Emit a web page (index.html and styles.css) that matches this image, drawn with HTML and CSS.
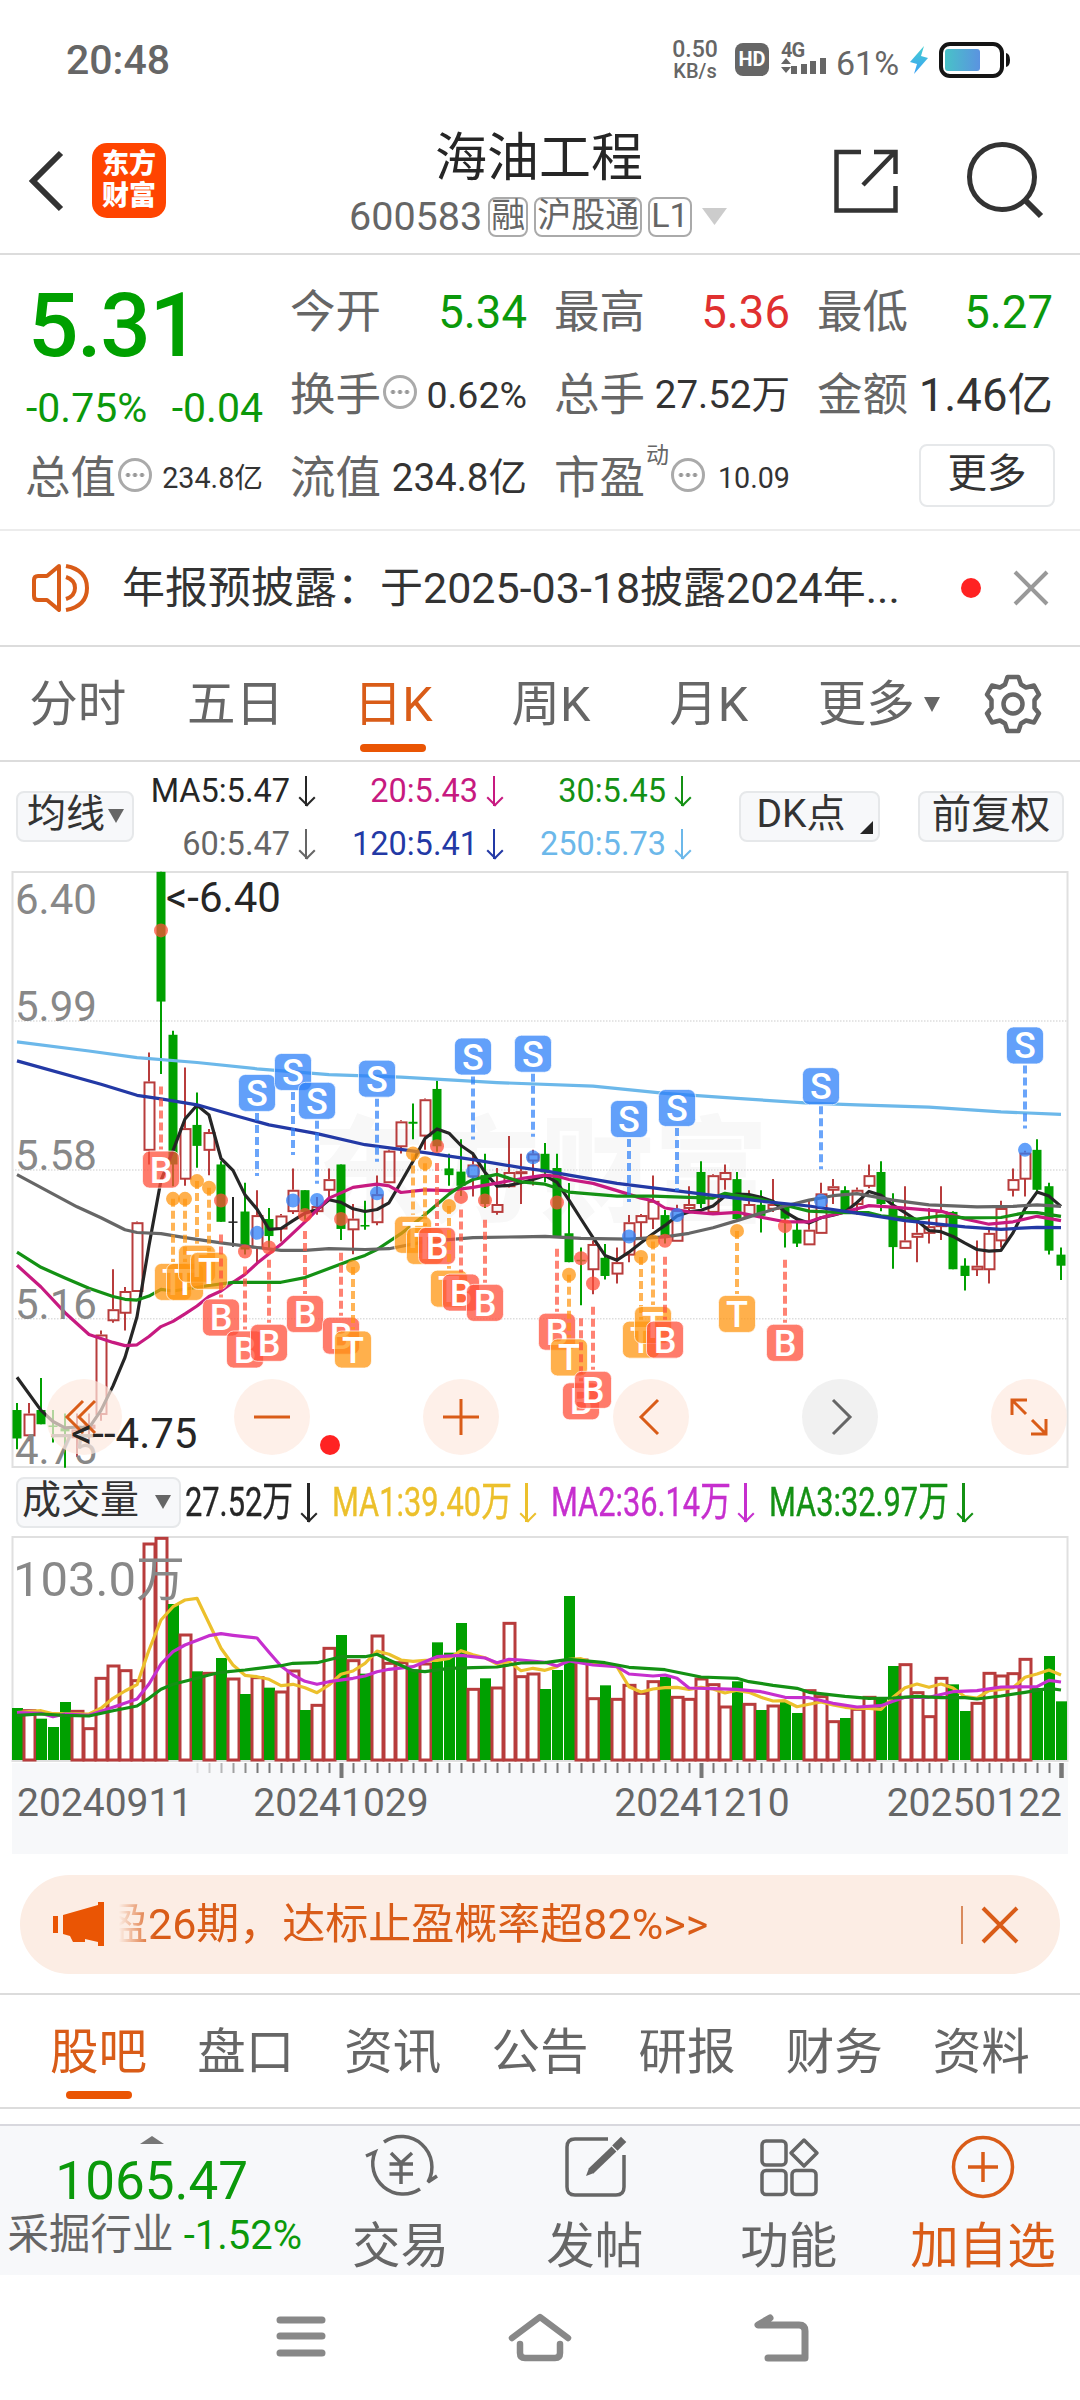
FILE: index.html
```html
<!DOCTYPE html>
<html lang="zh-CN">
<head>
    <meta charset="utf-8">
    <title>海油工程 600583</title>
    <link rel="stylesheet" href="styles.css">
</head>
<body>
<div class="status">
    <span class="clock">20:48</span>
    <span class="speed">0.50<br><b>KB/s</b></span>
    <span class="hd">HD</span>
    <span class="signal">
        <b>4G</b>
        <svg width="46" height="18" viewBox="0 0 46 18"><path d="M0 6L5 0L10 6zM0 9L5 15L10 9z"/><path d="M10 8h6v8h-6zM20 6h6v10h-6zM29 3h6v13h-6zM39 0h6v16h-6z"/></svg>
    </span>
    <span class="percent">61%</span>
    <svg class="bolt" width="20" height="32" viewBox="0 0 20 32">
        <defs><linearGradient id="spark" x2="0" y2="1"><stop offset="0" stop-color="#45cfd0"/><stop offset="1" stop-color="#3aa0f5"/></linearGradient></defs>
        <path d="M15 2L1 18l7 2L5 30L19 14l-7-2z" fill="url(#spark)"/>
    </svg>
    <svg class="battery" width="74" height="38" viewBox="0 0 74 38">
        <defs><linearGradient id="charge"><stop offset="0" stop-color="#48c2c8"/><stop offset="1" stop-color="#5b93e0"/></linearGradient></defs>
        <rect x="3" y="3" width="61" height="32" rx="9" fill="none" stroke="#151515" stroke-width="4"/>
        <rect x="7" y="8" width="35" height="22" rx="3" fill="url(#charge)"/>
        <path d="M68 12q4 1 4 7t-4 7z" fill="#151515"/>
    </svg>
</div>

<div class="header">
    <svg class="back" width="38" height="64" viewBox="0 0 38 64"><path d="M34 4L6 32L34 60" fill="none" stroke="#333" stroke-width="6"/></svg>
    <div class="logo">东方<br>财富</div>
    <div class="stock">
        <h1>海油工程</h1>
        <p>600583<i>融</i><i>沪股通</i><i>L1</i><svg width="26" height="18" viewBox="0 0 26 18"><path d="M0 0h25L12.500 17z" fill="#ccc"/></svg></p>
    </div>
    <svg class="share" width="68" height="68" viewBox="0 0 68 68"><path d="M29 5H4.500V63.500H63.500V39M42 5H63.500V27M63 5L31 38" fill="none" stroke="#333" stroke-width="4.500"/></svg>
    <svg class="search" width="80" height="80" viewBox="0 0 80 80"><circle cx="37" cy="36" r="32.500" fill="none" stroke="#333" stroke-width="5"/><path d="M60 59L76 75" stroke="#333" stroke-width="6"/></svg>
</div>

<div class="quote">
    <div class="price">5.31</div>
    <div><label>今开</label><span class="v45 down">5.34</span></div>
    <div><label>最高</label><span class="v45 up">5.36</span></div>
    <div><label>最低</label><span class="v45 down">5.27</span></div>
    <div class="change"><span>-0.75%</span><span>-0.04</span></div>
    <div><label>换手</label><em class="dots"></em><span class="v37">0.62%</span></div>
    <div><label>总手</label><span class="v38">27.52万</span></div>
    <div><label>金额</label><span class="v45">1.46亿</span></div>
    <div><label>总值</label><em class="dots"></em><span class="v28">234.8亿</span></div>
    <div><label>流值</label><span class="v38">234.8亿</span></div>
    <div><label>市盈<sup>动</sup></label><em class="dots dots-pe"></em><span class="v28">10.09</span></div>
    <div><button class="more">更多</button></div>
</div>

<div class="notice">
    <svg width="60" height="50" viewBox="0 0 60 50" fill="none" stroke="#d95c18" stroke-width="4"><path d="M28 3L16 13H7Q3 13 3 17V33Q3 37 7 37H16L28 47Z" stroke-linejoin="round"/><path d="M35 14Q44 17 44 25T35 36M35 3Q56 7 56 25T35 47"/></svg>
    <span>年报预披露：于2025-03-18披露2024年...</span>
    <i class="red"></i>
    <svg width="36" height="36" viewBox="0 0 36 36"><path d="M2 2L34 34M34 2L2 34" stroke="#999" stroke-width="4"/></svg>
</div>

<div class="periods">
    <a>分时</a><a>五日</a><a class="on">日K</a><a>周K</a><a>月K</a><a>更多<small></small></a>
    <svg width="60" height="60" viewBox="0 0 60 60" fill="none" stroke="#666" stroke-width="4.500"><path d="M24.500 3H35.500L38 10.500L43 13.500L51 11.500L56 20.500L51.500 26V34L56 39.500L51 48.500L43 46.500L38 49.500L35.500 57H24.500L22 49.500L17 46.500L9 48.500L4 39.500L8.500 34V26L4 20.500L9 11.500L17 13.500L22 10.500Z" stroke-linejoin="round"/><circle cx="30" cy="30" r="9.500"/></svg>
</div>

<div class="averages">
    <button class="pick">均线<small></small></button>
    <div class="legend">
        <span class="c-black">MA5:5.47<s></s></span><span class="c-pink">20:5.43<s></s></span><span class="c-green">30:5.45<s></s></span>
        <span class="c-gray">60:5.47<s></s></span><span class="c-blue">120:5.41<s></s></span><span class="c-sky">250:5.73<s></s></span>
    </div>
    <button class="dk">DK点</button>
    <button class="adjust">前复权</button>
</div>

<svg id="kline" width="1080" height="598" viewBox="0 870 1080 598"></svg>

<div class="volume-head">
    <button class="pick">成交量<small></small></button>
    <span class="c-black w105"><b>27.52万</b></span><s class="c-black"></s>
    <span class="c-yellow w177"><b>MA1:39.40万</b></span><s class="c-yellow"></s>
    <span class="c-violet w177"><b>MA2:36.14万</b></span><s class="c-violet"></s>
    <span class="c-green w177"><b>MA3:32.97万</b></span><s class="c-green"></s>
</div>

<svg id="volume" width="1080" height="326" viewBox="0 1536 1080 326"></svg>

<div class="banner">
    <svg width="54" height="46" viewBox="0 0 54 46" fill="#ea5504"><path d="M0 14h5v17H0zM10 13L45 3V0h6v44h-6v-4l-13-3v3H20l-3-6l-7-2z"/></svg>
    <span>盈26期，达标止盈概率超82%&gt;&gt;</span>
    <svg class="shut" width="38" height="38" viewBox="0 0 38 38"><path d="M2 2L36 36M36 2L2 36" stroke="#d95c18" stroke-width="4"/></svg>
</div>

<div class="sections">
    <a class="on">股吧</a><a>盘口</a><a>资讯</a><a>公告</a><a>研报</a><a>财务</a><a>资料</a>
</div>

<div class="toolbar">
    <div class="index">
        <small></small>
        <strong>1065.47</strong>
        <p>采掘行业 <span>-1.52%</span></p>
    </div>
    <a>
        <svg width="76" height="68" viewBox="0 0 76 68" fill="none" stroke="#666" stroke-width="3.500"><path d="M21 9A30.500 30.500 0 0 1 65 49L74 43M57 56A30.500 30.500 0 0 1 12 19L3 23"/><path d="M28 20L38 30L49 20M26.500 31H50M26.500 41H50M38 30V51"/></svg>
        交易
    </a>
    <a>
        <svg width="68" height="68" viewBox="0 0 68 68" fill="none" stroke="#666" stroke-width="3.500"><path d="M47 6H14Q6 6 6 14V54Q6 62 14 62H55Q63 62 63 54V22"/><path d="M30 38L53 16" stroke-width="7"/><path d="M56.500 12.500L60 9" stroke-width="7.500" stroke-linecap="square"/><path d="M25 43L28 35L33 40Z" fill="#666" stroke="none"/></svg>
        发帖
    </a>
    <a>
        <svg width="68" height="68" viewBox="0 0 68 68" fill="none" stroke="#666" stroke-width="3.500"><rect x="7" y="8" width="24" height="24" rx="4"/><rect x="7" y="37.500" width="24" height="24" rx="4"/><rect x="37" y="37.500" width="24" height="24" rx="4"/><path d="M49 7L62 20L49 33L36 20Z" stroke-linejoin="round"/></svg>
        功能
    </a>
    <a class="on">
        <svg width="68" height="68" viewBox="0 0 68 68" fill="none" stroke="#d95c18" stroke-width="3.500"><circle cx="34" cy="34" r="29.500"/><path d="M19 34H49M34 19V49"/></svg>
        加自选
    </a>
</div>

<div class="nav">
    <svg width="56" height="50" viewBox="0 0 56 50"><path d="M7 9H49M7 25H49M7 42H49"/></svg>
    <svg width="66" height="54" viewBox="0 0 66 54"><path d="M5 27L33 6L61 27M13 33V42Q13 47 18 47H48Q53 47 53 42V33" fill="none" stroke-width="6.500" stroke-linejoin="round"/></svg>
    <svg width="60" height="54" viewBox="0 0 60 54"><path d="M19 7L7 14H48Q54 14 54 20V47H17" stroke-linejoin="round"/></svg>
</div>
<script src="script.js"></script>
</body>
</html>
```
FILE: styles.css
```css
* {
    box-sizing: border-box;
    margin: 0;
    padding: 0;
}
body {
    width: 1080px;
    height: 2400px;
    overflow: hidden;
    background: #fff;
    color: #333;
    font-family: Roboto, "Noto Sans CJK SC", sans-serif;
    line-height: 1;
}
svg {
    display: block;
    flex: none;
}
i, em, s {
    font-style: normal;
    text-decoration: none;
}
button {
    font-family: inherit;
    line-height: 1;
    color: #333;
    background: #f7f8fa;
    border: 2px solid #e6e8ea;
    border-radius: 8px;
    white-space: nowrap;
}

/* status bar */
.status {
    display: flex;
    align-items: center;
    height: 120px;
    padding: 0 65px 0 66px;
    color: #666;
}
.clock {
    font-size: 41px;
    font-weight: 500;
    width: 604px;
}
.speed {
    width: 50px;
    font-size: 23px;
    font-weight: 500;
    line-height: 21px;
    text-align: center;
}
.speed b {
    font-size: 20px;
    font-weight: 500;
}
.hd {
    width: 34px;
    height: 33px;
    margin: -1px 0 0 15px;
    border-radius: 8px;
    background: #666;
    color: #fff;
    font-size: 20px;
    font-weight: 700;
    line-height: 33px;
    text-align: center;
}
.signal {
    width: 46px;
    margin: -2px 0 0 12px;
    fill: #666;
}
.signal b {
    display: block;
    font-size: 20px;
    height: 15px;
    line-height: 15px;
    letter-spacing: -1px;
}
.percent {
    margin: 6px 0 0 9px;
    width: 64px;
    font-size: 34px;
}
.bolt {
    margin-left: 9px;
}
.battery {
    margin-left: 9px;
}

/* title bar */
.header {
    display: flex;
    align-items: center;
    height: 135px;
    padding: 0 35px 0 27px;
    border-bottom: 2px solid #dcdcdc;
}
.back {
    margin-top: -12px;
}
.logo {
    width: 75px;
    height: 75px;
    margin: -12px 0 0 27px;
    padding-top: 5px;
    border-radius: 15px;
    background: #ff4400;
    color: #fff;
    font-size: 27px;
    font-weight: 900;
    line-height: 32px;
    text-align: center;
}
.stock {
    width: 378px;
    margin-left: 183px;
}
.stock h1 {
    width: 380px;
    height: 61px;
    color: #262626;
    font-size: 52px;
    font-weight: 400;
    line-height: 48px;
    text-align: center;
}
.stock p {
    display: flex;
    align-items: center;
    gap: 6px;
    height: 42px;
    font-size: 39.500px;
    color: #666;
    white-space: nowrap;
}
.stock i {
    height: 40px;
    padding: 0 1px;
    border: 2px solid #aaa;
    border-radius: 8px;
    font-size: 34px;
    line-height: 33px;
}
.stock p svg {
    margin-left: 4px;
}
.share {
    margin: -12px 0 0 105px;
}
.search {
    margin: -11px 0 0 65px;
}

/* quote */
.quote {
    display: grid;
    grid-template-columns: 237px 236px 235px 235px;
    grid-template-rows: 83px 83px 83px;
    column-gap: 28px;
    height: 276px;
    padding: 16px 0 0 26px;
    border-bottom: 2px solid #ececec;
}
.quote > div {
    display: flex;
    align-items: center;
}
.quote label {
    position: relative;
    margin-left: -1px;
    color: #666;
    font-size: 45.500px;
}
.quote sup {
    position: absolute;
    left: 92px;
    top: -12px;
    font-size: 23px;
}
.quote span {
    margin-left: auto;
}
.quote .v45 { font-size: 45.500px; }
.quote .v38 { font-size: 38.500px; }
.quote .v37 { font-size: 37.500px; }
.quote .v28 { font-size: 28.700px; }
.quote .up { color: #e03030; }
.quote .down { color: #0b990b; }
.quote .price {
    padding: 26px 0 0 2px;
    color: #00a000;
    font-size: 89px;
    font-weight: 500;
    letter-spacing: -1.500px;
}
.quote .change {
    padding-top: 25px;
    color: #0b990b;
    font-size: 41px;
}
.quote .change span {
    margin: 0;
}
.quote .change span + span {
    margin-left: auto;
}
.dots {
    width: 34px;
    height: 34px;
    margin: -8px 0 0 2px;
    border: 3px solid #aaa;
    border-radius: 50%;
    background: radial-gradient(circle, #999 1.800px, transparent 2.500px) center / 7px 28px repeat-x;
    background-clip: content-box;
    padding: 0 3px;
}
.dots-pe {
    margin-left: 26px;
}
.quote .more {
    width: 136px;
    height: 63px;
    margin: -7px -2px 0 auto;
    padding-bottom: 3px;
    background: #fff;
    font-size: 39.500px;
}

/* notice */
.notice {
    display: flex;
    align-items: center;
    height: 116px;
    padding: 0 31px 0 31px;
    border-bottom: 2px solid #dcdcdc;
}
.notice span {
    margin-left: 31px;
    font-size: 43px;
    white-space: nowrap;
}
.red {
    width: 20px;
    height: 20px;
    margin: 0 32px 0 auto;
    border-radius: 50%;
    background: #f22;
}

/* tabs */
.periods, .sections {
    display: flex;
    align-items: center;
    height: 115px;
    border-bottom: 2px solid #dcdcdc;
}
.periods a, .sections a {
    position: relative;
    top: 2px;
    width: 157.700px;
    color: #666;
    font-size: 48.500px;
    text-align: center;
}
.periods a {
    left: -1px;
    white-space: nowrap;
}
.periods > svg {
    margin-left: 37px;
}
.periods .on, .sections .on {
    color: #d95c18;
}
.periods .on::after, .sections .on::after {
    content: "";
    position: absolute;
    left: 50%;
    bottom: -22px;
    width: 66px;
    height: 8px;
    margin-left: -33px;
    border-radius: 4px;
    background: #ea5504;
}
.periods small {
    position: absolute;
    right: 5px;
    top: 16px;
    border: 8px solid transparent;
    border-top: 15px solid #666;
    border-bottom: 0;
}

/* averages */
.averages {
    display: flex;
    align-items: center;
    height: 108px;
    padding-left: 16px;
}
.pick {
    display: flex;
    align-items: center;
    justify-content: space-between;
    height: 51px;
    padding: 0 8px 3px;
    font-size: 39px;
}
.averages .pick {
    width: 118px;
    padding-left: 9px;
}
.pick small {
    margin-top: 3px;
    border: 8px solid transparent;
    border-top: 14px solid #666;
    border-bottom: 0;
}
.legend {
    display: grid;
    grid-template-columns: 180px 188px 188px;
    grid-template-rows: 53px 53px;
    margin: 3px 49px 0 0;
}
.legend span {
    display: flex;
    align-items: center;
    justify-content: flex-end;
    font-size: 32.500px;
}
s {
    position: relative;
    width: 16px;
    height: 30px;
    background: linear-gradient(currentColor, currentColor) center / 2px 100% no-repeat;
}
s::after {
    content: "";
    position: absolute;
    left: 3px;
    bottom: 2px;
    width: 10px;
    height: 10px;
    border: solid currentColor;
    border-width: 0 2px 2px 0;
    transform: rotate(45deg);
}
.legend s {
    margin-left: 8px;
}
.averages > button {
    height: 51px;
}
.dk {
    position: relative;
    width: 141px;
    padding: 0 17px 3px 0;
    font-size: 39px;
}
.dk::after {
    content: "";
    position: absolute;
    right: 5px;
    bottom: 6px;
    border-left: 13px solid transparent;
    border-bottom: 13px solid #262626;
}
.adjust {
    width: 146px;
    margin-left: 38px;
    padding-bottom: 3px;
    font-size: 39.500px;
}
.c-black { color: #262626; }
.c-pink { color: #c71a80; }
.c-green { color: #149114; }
.c-gray { color: #666; }
.c-blue { color: #2339a5; }
.c-sky { color: #6cb8ea; }
.c-yellow { color: #ecc02c; }
.c-violet { color: #c62fce; }

/* volume */
.volume-head {
    display: flex;
    align-items: center;
    height: 68px;
    padding-left: 16px;
}
.volume-head .pick {
    width: 165px;
    margin-right: 4px;
    padding: 0 8px 3px 4px;
}
.volume-head span {
    font-size: 41px;
}
.volume-head b {
    display: inline-block;
    font-weight: 400;
    white-space: nowrap;
    transform: scaleX(.75);
    transform-origin: left;
    -webkit-text-stroke: .4px currentColor;
}
.volume-head s {
    height: 39px;
    margin: 0 16px 0 8px;
    background-size: 3px 100%;
}
.w105 { width: 107px; }
.w177 { width: 178.500px; }

/* charts */
.axis {
    fill: #888;
    font-size: 42px;
}
.note {
    fill: #262626;
    font-size: 42px;
}
.date {
    fill: #666;
    font-size: 39px;
}
.mark {
    fill: #fff;
    font: 500 36px Roboto, sans-serif;
    text-anchor: middle;
}
.watermark {
    fill: #f8f8f8;
    font-size: 114px;
    font-weight: 900;
}

/* banner */
.banner {
    display: flex;
    align-items: center;
    width: 1040px;
    height: 99px;
    margin: 13px 20px 19px;
    padding: 0 41px 0 33px;
    border-radius: 50px;
    background: #fcede4;
    color: #d95c18;
}
.banner span {
    margin-left: -2px;
    font-size: 43px;
    white-space: nowrap;
    -webkit-mask-image: linear-gradient(90deg, transparent 14px, #000 50px);
    mask-image: linear-gradient(90deg, transparent 14px, #000 50px);
}
.shut {
    box-sizing: content-box;
    margin-left: auto;
    padding-left: 18px;
    border-left: 2px solid #d98a5c;
}

.sections {
    height: 116px;
    padding: 0 25px;
    border-top: 2px solid #dcdcdc;
}
.sections a {
    width: 147.140px;
}

/* toolbar */
.toolbar {
    display: flex;
    height: 151px;
    margin-top: 15px;
    border-top: 2px solid #d8d8de;
    background: #f7f8fa;
}
.index {
    width: 304px;
    text-align: center;
}
.index small {
    display: block;
    width: 24px;
    margin: 10px 0 14px 140px;
    border: 12px solid transparent;
    border-bottom: 8px solid #777;
    border-top: 0;
}
.index strong {
    display: block;
    color: #0b990b;
    font-size: 53px;
    font-weight: 400;
    line-height: 46px;
}
.index p {
    margin: 10px 0 0 6px;
    color: #666;
    font-size: 41.500px;
    white-space: nowrap;
}
.index span {
    color: #0b990b;
    font-size: 40px;
}
.toolbar a {
    display: flex;
    flex-direction: column;
    align-items: center;
    width: 194.500px;
    padding-top: 7px;
    color: #666;
    font-size: 48.500px;
    line-height: 92px;
    white-space: nowrap;
}
.toolbar .on {
    color: #d95c18;
}

.nav {
    display: flex;
    justify-content: center;
    gap: 178px;
    padding: 36px 0 0 3px;
    fill: none;
    stroke: #888;
    stroke-width: 7px;
    stroke-linecap: round;
}
```
FILE: script.js
```js
var GREEN = '#00a000', RED = '#b83c3c';

// direction, high, body top, body bottom, low
var candles = [
    ['g',1373,1391,1463,1490],['r',1373,1400,1455,1470],['g',1310,1391,1427,1427],['g',1391,1430,1434,1473],
    ['g',1400,1437,1445,1537],['r',1400,1440,1460,1510],['r',1400,1428,1436,1480],['r',1190,1200,1401,1418],
    ['r',1035,1136,1164,1170],['r',1080,1090,1145,1190],['r',914,916,1090,1092],['r',487,560,733,770],
    ['g',30,30,358,541],['g',432,442,770,825],['r',525,678,806,824],['g',588,670,723,778],
    ['r',680,688,733,797],['g',762,770,915,915],['k',852,914,917,978],['g',816,889,985,998],
    ['r',835,898,980,1018],['g',880,908,951,985],['r',895,899,932,965],['r',780,834,888,895],
    ['g',835,835,890,910],['r',852,875,888,897],['r',780,807,834,855],['g',770,770,933,961],
    ['r',870,907,934,997],['g',862,923,927,935],['r',798,845,916,924],['r',733,735,815,817],
    ['r',658,661,724,742],['g',616,662,667,706],['r',603,605,697,733],['g',558,579,724,738],
    ['g',743,780,797,824],['g',706,788,824,850],['r',740,770,800,851],['g',743,797,870,880],
    ['r',779,870,890,897],['r',698,789,825,828],['r',743,787,791,870],['r',733,742,760,823],
    ['g',716,743,790,815],['g',743,779,951,955],['g',817,944,1017,1017],['g',980,1011,1015,1126],
    ['r',962,971,1035,1098],['g',971,1006,1052,1061],['r',980,1017,1046,1071],['r',898,916,998,1017],
    ['r',895,898,916,955],['r',798,862,907,933],['g',885,898,950,970],['r',872,885,963,963],
    ['r',825,870,880,890],['g',762,789,870,880],['r',795,797,890,890],['r',770,789,807,834],
    ['g',789,807,908,915],['r',835,870,900,905],['g',835,872,900,942],['r',807,870,882,890],
    ['g',870,870,907,980],['g',905,935,970,979],['r',862,935,972,972],['r',816,843,943,943],
    ['r',807,825,834,870],['g',825,835,895,895],['r',828,834,870,897],['r',770,797,824,830],
    ['g',762,789,870,888],['g',843,875,979,1034],['r',825,962,981,981],['r',910,943,953,1017],
    ['r',880,926,943,970],['r',825,888,926,961],['g',888,890,1035,1035],['g',1007,1026,1052,1089],
    ['r',962,1026,1035,1052],['r',935,943,1035,1071],['r',862,880,962,980],['r',780,807,834,851],
    ['r',735,740,806,851],['g',706,733,834,838],['g',816,825,988,998],['g',980,998,1026,1062]
];

// colour, then day index and level pairs
var lines = [
    ['#6cb8ea', 0,460,6,483,10,500,15,512,20,528,26,543,32,549,40,563,48,572,54,590,60,603,66,615,70,619,76,625,82,637,87,643],
    ['#262626', 0,1308,2,1392,3,1420,4,1436,5,1434,6,1436,7,1392,8,1330,9,1258,10,1155,11,975,12,810,13,735,14,655,15,620,16,645,17,755,18,785,19,847,20,883,21,934,22,932,23,912,24,893,25,885,26,859,27,866,28,882,29,889,30,884,31,867,32,815,33,762,34,704,35,680,36,691,37,722,38,743,39,790,40,825,41,823,42,816,43,808,44,798,45,815,46,860,47,908,48,955,49,1000,50,1012,51,992,52,968,53,945,54,924,55,900,56,890,57,886,58,875,59,850,60,845,61,846,62,853,63,863,64,890,65,908,66,918,67,905,68,898,69,890,70,866,71,838,72,848,73,873,74,892,75,912,76,937,77,940,78,952,79,969,80,985,81,989,82,987,83,943,84,882,85,840,86,850,87,876],
    ['#c71a80', 0,1025,2,1080,4,1145,6,1200,7,1210,8,1220,9,1228,10,1226,11,1205,12,1180,13,1167,14,1148,15,1128,16,1104,17,1090,18,1068,19,1048,20,1020,22,972,24,915,26,855,27,842,28,828,30,820,31,824,32,841,34,834,36,836,38,828,40,817,42,806,44,797,45,800,46,808,48,818,50,836,52,855,53,862,54,880,56,890,58,895,60,891,62,903,64,915,66,915,67,905,69,890,71,874,73,878,77,888,79,908,81,921,83,915,85,901,87,912],
    ['#149114', 0,992,2,1030,4,1057,6,1083,8,1104,9,1111,10,1113,11,1103,12,1086,13,1090,16,1076,18,1068,20,1068,22,1068,24,1056,26,1033,28,1010,29,1000,30,985,32,945,34,897,36,845,37,824,38,808,40,795,42,814,44,820,46,840,50,850,53,850,56,853,58,855,59,843,62,858,64,873,66,888,69,892,71,892,72,900,75,908,77,900,79,905,82,904,84,892,85,892,87,901],
    ['#666', 0,796,5,877,7,905,9,935,10,942,12,945,14,955,17,968,20,980,22,987,24,987,26,983,29,985,31,983,34,965,38,955,42,953,44,952,47,957,51,959,54,953,56,944,58,930,60,912,62,893,64,875,66,860,68,849,70,844,73,860,76,872,80,877,83,876,85,872,87,876],
    ['#2339a5', 0,508,7,567,10,595,12,604,15,619,18,645,21,670,25,692,29,720,34,740,38,758,42,778,44,786,46,797,50,818,54,833,58,848,62,863,66,875,70,893,74,912,79,928,82,934,85,929,87,930]
];

// letter, day index, dot level, badge level
var marks = [
    ['B',12,178,783],['T',13,857,1067],['T',14,857,1067],['T',15,812,1021],['T',16,829,1039],
    ['B',17,861,1157],['B',19,990,1238],['S',20,943,589],['B',21,980,1221],['S',23,861,536],
    ['B',24,898,1148],['S',25,860,609],['B',27,908,1203],['T',28,1029,1238],['S',30,843,553],
    ['T',33,742,948],['T',34,767,976],['B',35,724,976],['T',36,875,1084],['B',37,852,1094],
    ['S',38,788,497],['B',39,861,1120],['S',43,752,490],['B',45,866,1193],['T',46,1049,1258],
    ['B',47,1007,1369],['B',48,1071,1340],['S',51,952,655],['T',52,1004,1213],['T',53,965,1176],
    ['B',54,963,1213],['S',55,898,627],['T',60,938,1148],['B',64,926,1221],['S',67,862,572],['S',84,733,469]
];
var markColor = { B: '#ff4f3a', S: '#2d80f8', T: '#ff9510' };

var volumes = 'g744 r752 g776 g801 g726 r754 r806 r655 r618 r632 r662 r252 r235 g432 r525 g634 r640 g594 r657 g702 r653 g683 r696 r633 g750 r736 r565 g525 r602 g641 r528 r610 r608 g628 r612 g547 g578 g489 r688 g655 r684 r490 r650 r642 g687 g630 g408 r600 r716 g676 r718 r676 r700 r665 g651 r712 r718 r657 r674 r741 g664 r733 g750 r738 g726 g759 r692 r710 r785 g774 r748 r712 g712 g618 r614 r698 r770 r655 g673 g753 r730 r640 r648 r641 r598 g684 g588 g724'.split(' ');

var volumeLines = [
    ['#ecc02c', 0,758,2,752,3,761,6,762,7,745,8,715,9,693,10,674,11,570,12,480,13,440,14,420,15,415,16,490,17,565,18,615,19,646,20,650,21,658,22,677,23,673,24,683,25,698,26,675,27,643,28,633,29,610,30,573,31,583,32,600,33,604,34,601,35,601,36,595,37,572,38,584,39,593,40,612,41,605,42,632,43,625,44,631,45,620,46,598,47,596,48,608,50,620,51,680,52,696,53,687,54,683,55,682,56,688,57,682,58,687,59,699,60,691,61,697,62,712,63,723,64,722,65,740,66,733,67,726,68,735,69,742,70,745,71,745,72,748,73,712,74,683,75,672,76,682,77,672,78,684,79,710,80,714,81,692,82,688,83,683,84,652,85,642,86,630,87,645],
    ['#c62fce', 0,758,2,760,3,770,4,762,6,766,8,742,10,717,11,672,12,612,13,575,14,555,16,527,17,521,18,526,20,534,21,577,22,618,23,645,24,664,25,673,26,665,28,655,29,648,30,635,31,628,33,620,34,605,35,590,37,586,39,594,40,608,41,598,42,600,44,607,45,618,46,603,48,615,50,620,51,642,53,648,54,645,55,655,56,684,58,686,60,688,62,695,64,712,66,713,68,730,70,741,72,737,73,724,74,712,76,712,78,695,80,692,82,681,85,680,86,661,87,666],
    ['#149114', 0,766,2,762,4,766,6,768,8,752,10,738,11,715,12,688,13,673,15,655,16,645,17,637,19,630,22,617,23,610,25,608,27,590,29,590,30,583,31,600,33,632,34,635,36,625,38,623,40,621,42,609,44,608,46,598,49,608,51,622,54,629,57,651,60,655,61,665,63,676,65,685,66,697,69,709,71,715,73,714,75,709,77,713,79,713,80,717,82,708,84,697,86,685,87,690]
];

function dayX(i) {
    return 17 + i * 12;
}

function klineY(level) {
    return 860 + level / 2.529;
}

function volumeY(level) {
    return 1460 + level / 3;
}

function line(x1, y1, x2, y2, color, width, extra) {
    return '<line x1="' + x1 + '" y1="' + y1 + '" x2="' + x2 + '" y2="' + y2 + '" stroke="' + color + '" stroke-width="' + width + '" ' + (extra || '') + '/>';
}

function rect(x, y, w, h, attrs) {
    return '<rect x="' + x + '" y="' + y + '" width="' + w + '" height="' + h + '" ' + attrs + '/>';
}

function circle(x, y, r, attrs) {
    return '<circle cx="' + x + '" cy="' + y + '" r="' + r + '" ' + attrs + '/>';
}

function text(x, y, cls, str, attrs) {
    return '<text x="' + x + '" y="' + y + '" class="' + cls + '" ' + (attrs || '') + '>' + str + '</text>';
}

function curve(data, toY) {
    var points = [];
    for (var i = 1; i < data.length; i += 2) {
        points.push(dayX(data[i]) + ',' + toY(data[i + 1]).toFixed(1));
    }
    return '<polyline points="' + points.join(' ') + '" fill="none" stroke="' + data[0] + '" stroke-width="3.2" stroke-linejoin="round"/>';
}

function drawMark(m) {
    var x = dayX(m[1]), dot = klineY(m[2]), y = klineY(m[3]), color = markColor[m[0]];
    var from = m[0] == 'S' ? y + 20 : y - 83;
    if (m[0] == 'T') from = dot;
    var to = m[0] == 'S' ? y + 83 : y - 20;
    return circle(x, dot, 7, 'fill="' + color + '" opacity=".75"') +
        line(x, from, x, to, color, 4, 'stroke-dasharray="8 4" opacity=".7"') +
        rect(x - 18.500, y - 18.500, 37, 37, 'rx="7" fill="' + color + '" fill-opacity=".75" stroke="#fff" stroke-opacity=".7"') +
        text(x, y + 13, 'mark', m[0]);
}

function drawKline() {
    var out = text(312, 1212, 'watermark', '东方财富');
    [1021, 1170, 1318.700].forEach(function (y) {
        out += line(12, y, 1068, y, '#ddd', 1.500, 'stroke-dasharray="1.5 1.5"');
    });
    out += rect(12.500, 872, 1055, 595, 'fill="none" stroke="#e0e0e0" stroke-width="2"');

    candles.forEach(function (c, i) {
        var x = dayX(i), top = klineY(c[2]), bottom = klineY(c[3]);
        var color = c[0] == 'g' ? GREEN : c[0] == 'r' ? RED : '#262626';
        if (c[0] == 'r') {
            out += line(x, klineY(c[1]), x, top, color, 2) + line(x, bottom, x, klineY(c[4]), color, 2);
            out += rect(x - 4.500, top + 1, 10, Math.max(bottom - top - 1, 1), 'fill="none" stroke="' + color + '" stroke-width="2"');
        } else {
            out += line(x, klineY(c[1]), x, klineY(c[4]), color, 2);
            out += rect(x - 4.500, top, 9, Math.max(bottom - top, 1.500), 'fill="' + color + '"');
        }
    });
    lines.forEach(function (l) { out += curve(l, klineY); });
    ['6.40', '5.99', '5.58', '5.16', '4.75'].forEach(function (s, i) {
        out += text(15, [914, 1021, 1170, 1319, 1464][i], 'axis', s);
    });
    marks.forEach(function (m) { out += drawMark(m); });

    // round chart buttons
    var icons = [
        'M83 1401l-16 16l16 16M95 1401l-16 16l16 16', 'M254 1417h36', 'M443 1417h36M461 1399v36',
        'M658 1400l-17 17l17 17', 'M833 1400l17 17l-17 17', 'M1026 1414l-14 -14M1012 1415v-15h15M1032 1420l14 14M1046 1419v15h-15'
    ];
    [84, 272, 461, 651, 840, 1029].forEach(function (x, i) {
        var gray = i == 4;
        out += circle(x, 1417, 38, gray ? 'fill="#eee" opacity=".8"' : 'fill="#feeae0" opacity=".7"');
        out += '<path d="' + icons[i] + '" fill="none" stroke="' + (gray ? '#666' : '#d95c18') + '" stroke-width="3"/>';
    });
    out += text(166, 912, 'note', '&lt;-6.40') + text(71, 1448, 'note', '&lt;--4.75');
    out += circle(330, 1445, 10, 'fill="#f22"');
    document.getElementById('kline').innerHTML = out;
}

function drawVolume() {
    var out = rect(12.500, 1537, 1055, 224, 'fill="none" stroke="#e0e0e0" stroke-width="2"');
    volumes.forEach(function (v, i) {
        var x = dayX(i), y = volumeY(+v.slice(1));
        if (v[0] == 'g') {
            out += rect(x - 5, y, 11, 1760 - y, 'fill="' + GREEN + '"');
        } else {
            out += rect(x - 5, y, 11, 1760 - y, 'fill="#fff" stroke="' + RED + '" stroke-width="3"');
        }
    });
    volumeLines.forEach(function (l) { out += curve(l, volumeY); });
    out += text(13, 1596, 'axis', '103.0万', 'style="font-size:49px"');

    out += rect(12, 1763, 1056, 91, 'fill="#f7f8fa"');
    for (var i = 15; i < 88; i++) {
        var big = i % 30 == 27;
        out += line(dayX(i) + 0.500, 1763, dayX(i) + 0.500, big ? 1778 : 1773, '#777', big ? 4 : 2, 'opacity="' + Math.min(1, (i - 14) / 6) + '"');
    }
    // last trading day
    out += line(1061.500, 1763, 1061.500, 1778, '#777', 4);
    out += text(17, 1816, 'date', '20240911') +
        text(341, 1816, 'date', '20241029', 'text-anchor="middle"') +
        text(702, 1816, 'date', '20241210', 'text-anchor="middle"') +
        text(1062, 1816, 'date', '20250122', 'text-anchor="end"');
    document.getElementById('volume').innerHTML = out;
}

drawKline();
drawVolume();
```
